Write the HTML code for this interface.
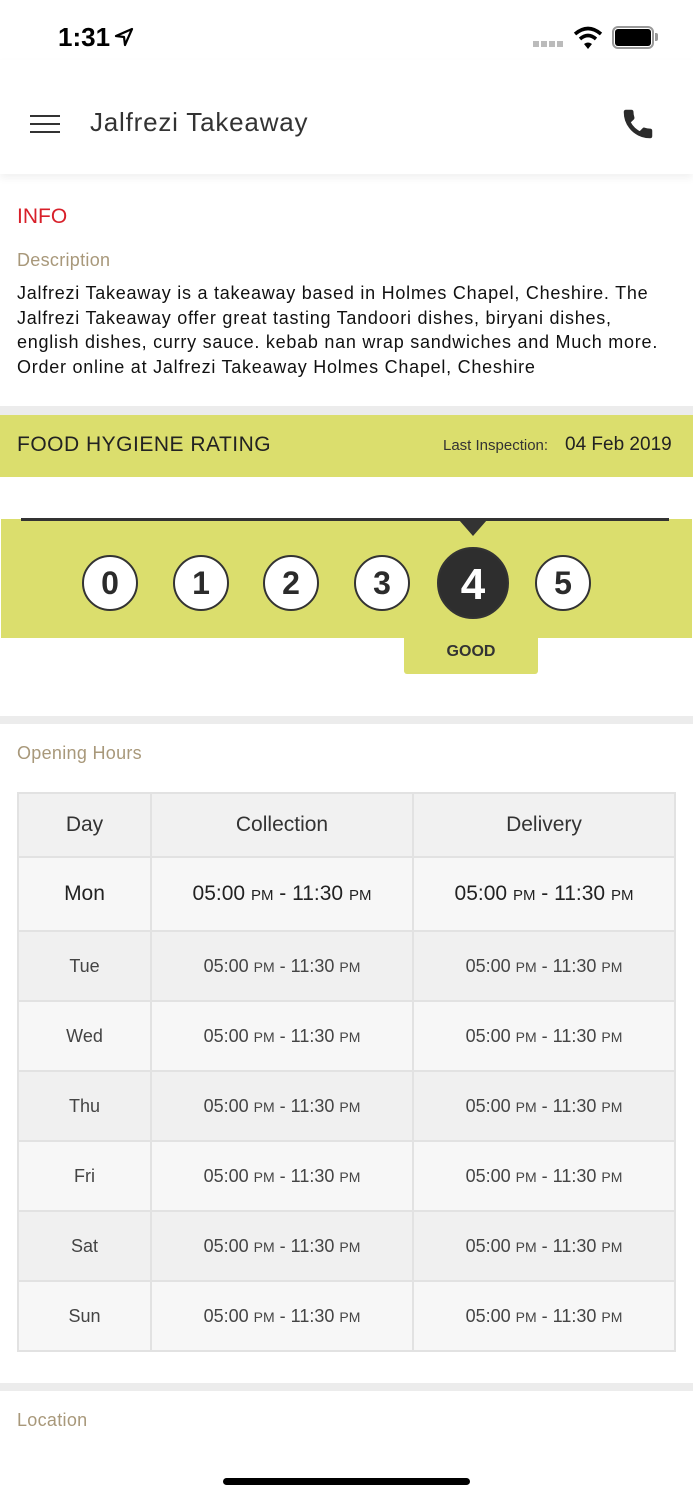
<!DOCTYPE html>
<html><head><meta charset="utf-8"><style>
*{margin:0;padding:0;box-sizing:border-box}
body{width:693px;height:1500px;background:#fff;font-family:"Liberation Sans",sans-serif;color:#222;position:relative;overflow:hidden}
.a{position:absolute}
.sep{position:absolute;left:0;width:693px;background:#ececec}
.lbl{position:absolute;left:17px;font-size:18px;color:#a8987a;letter-spacing:.3px}
table{position:absolute;left:17px;top:792px;width:659px;border-collapse:collapse}
td{border:2px solid #e2e2e2;text-align:center;color:#444;font-size:18px}
td small{font-size:14px}
.c{position:absolute;width:56px;height:56px;border-radius:50%;background:#fff;border:2px solid #333;font-size:32px;font-weight:bold;text-align:center;line-height:52px;color:#2b2b2b;top:555px}
</style></head><body>
<div class="a" style="left:58px;top:22px;font-size:26px;font-weight:bold;color:#000">1:31</div>
<svg class="a" style="left:114px;top:27px" width="20" height="20" viewBox="0 0 20 20"><path d="M18 2 L2 9 L10 10 L11 18 Z" fill="none" stroke="#000" stroke-width="2.2" stroke-linejoin="round"/></svg>
<div class="a" style="left:533px;top:41px;width:32px;height:6px;background:repeating-linear-gradient(90deg,#bbb 0 6px,transparent 6px 8px)"></div>
<svg class="a" style="left:573px;top:26px" width="30" height="24" viewBox="0 0 30 24"><path d="M2 8 Q15 -3 28 8" stroke="#000" stroke-width="3.5" fill="none"/><path d="M7 13 Q15 6 23 13" stroke="#000" stroke-width="3.5" fill="none"/><path d="M11 18 L15 23 L19 18 Q15 15 11 18Z" fill="#000"/></svg>
<div class="a" style="left:612px;top:26px;width:42px;height:23px;border:2px solid #999;border-radius:6px"></div>
<div class="a" style="left:615px;top:29px;width:36px;height:17px;background:#000;border-radius:3px"></div>
<div class="a" style="left:655px;top:33px;width:3px;height:8px;background:#999;border-radius:0 2px 2px 0"></div>

<div class="a" style="left:0;top:60px;width:693px;height:114px;box-shadow:0 4px 8px rgba(0,0,0,.06)"></div>
<div class="a" style="left:30px;top:115px;width:30px;height:2px;background:#333;box-shadow:0 8px 0 #333,0 16px 0 #333"></div>
<div class="a" style="left:90px;top:107px;font-size:26px;color:#333;letter-spacing:.8px">Jalfrezi Takeaway</div>
<svg class="a" style="left:620px;top:106px" width="36" height="36" viewBox="0 0 24 24"><path d="M6.6 10.8c1.4 2.8 3.8 5.1 6.6 6.6l2.2-2.2c.3-.3.7-.4 1-.2 1.1.4 2.3.6 3.6.6.6 0 1 .4 1 1V20c0 .6-.4 1-1 1C10.6 21 3 13.4 3 4c0-.6.4-1 1-1h3.5c.6 0 1 .4 1 1 0 1.2.2 2.4.6 3.6.1.3 0 .7-.2 1z" fill="#2b2b2b" stroke="#2b2b2b" stroke-width="1"/></svg>

<div class="a" style="left:17px;top:205px;font-size:21px;color:#d8202a">INFO</div>
<div class="lbl" style="top:250px">Description</div>
<div class="a" style="left:17px;top:281px;width:650px;font-size:18px;line-height:24.5px;color:#111;letter-spacing:.75px">Jalfrezi Takeaway is a takeaway based in Holmes Chapel, Cheshire. The Jalfrezi Takeaway offer great tasting Tandoori dishes, biryani dishes, english dishes, curry sauce. kebab nan wrap sandwiches and Much more. Order online at Jalfrezi Takeaway Holmes Chapel, Cheshire</div>

<div class="sep" style="top:406px;height:9px"></div>
<div class="a" style="left:0;top:415px;width:693px;height:62px;background:#dbde6d"></div>
<div class="a" style="left:17px;top:433px;font-size:21px;color:#222;letter-spacing:.5px">FOOD HYGIENE RATING</div>
<div class="a" style="left:443px;top:437px;font-size:15px;color:#333">Last Inspection:</div>
<div class="a" style="left:565px;top:434px;font-size:19px;color:#222">04 Feb 2019</div>

<div class="a" style="left:1px;top:519px;width:691px;height:119px;background:#dbde6d"></div>
<div class="a" style="left:21px;top:518px;width:648px;height:3px;background:#333"></div>
<div class="a" style="left:459px;top:520px;width:0;height:0;border-left:14px solid transparent;border-right:14px solid transparent;border-top:16px solid #333"></div>
<div class="a" style="left:404px;top:636px;width:134px;height:38px;background:#dbde6d;border-radius:0 0 3px 3px;text-align:center;font-size:16px;font-weight:bold;color:#333;line-height:32px">GOOD</div>
<div class="c" style="left:82px">0</div>
<div class="c" style="left:173px">1</div>
<div class="c" style="left:263px">2</div>
<div class="c" style="left:354px">3</div>
<div class="c" style="left:437px;top:547px;width:72px;height:72px;line-height:72px;background:#2e2e2e;color:#fff;font-size:44px">4</div>
<div class="c" style="left:535px">5</div>

<div class="sep" style="top:716px;height:8px"></div>
<div class="lbl" style="top:743px">Opening Hours</div>
<table>
<tr style="height:64px;background:#f1f1f1"><td style="width:133px;font-size:21px;color:#333">Day</td><td style="width:262px;font-size:21px;color:#333">Collection</td><td style="font-size:21px;color:#333">Delivery</td></tr>
<tr style="height:74px;background:#f7f7f7"><td style="font-size:21px;color:#222">Mon</td><td style="font-size:21px;color:#222">05:00 <small style="font-size:15px">PM</small> - 11:30 <small style="font-size:15px">PM</small></td><td style="font-size:21px;color:#222">05:00 <small style="font-size:15px">PM</small> - 11:30 <small style="font-size:15px">PM</small></td></tr>
<tr style="height:70px;background:#f0f0f0"><td>Tue</td><td>05:00 <small>PM</small> - 11:30 <small>PM</small></td><td>05:00 <small>PM</small> - 11:30 <small>PM</small></td></tr>
<tr style="height:70px;background:#f7f7f7"><td>Wed</td><td>05:00 <small>PM</small> - 11:30 <small>PM</small></td><td>05:00 <small>PM</small> - 11:30 <small>PM</small></td></tr>
<tr style="height:70px;background:#f0f0f0"><td>Thu</td><td>05:00 <small>PM</small> - 11:30 <small>PM</small></td><td>05:00 <small>PM</small> - 11:30 <small>PM</small></td></tr>
<tr style="height:70px;background:#f7f7f7"><td>Fri</td><td>05:00 <small>PM</small> - 11:30 <small>PM</small></td><td>05:00 <small>PM</small> - 11:30 <small>PM</small></td></tr>
<tr style="height:70px;background:#f0f0f0"><td>Sat</td><td>05:00 <small>PM</small> - 11:30 <small>PM</small></td><td>05:00 <small>PM</small> - 11:30 <small>PM</small></td></tr>
<tr style="height:70px;background:#f7f7f7"><td>Sun</td><td>05:00 <small>PM</small> - 11:30 <small>PM</small></td><td>05:00 <small>PM</small> - 11:30 <small>PM</small></td></tr>
</table>
<div class="sep" style="top:1383px;height:8px"></div>
<div class="lbl" style="top:1410px">Location</div>
<div class="a" style="left:223px;top:1478px;width:247px;height:7px;border-radius:4px;background:#000"></div>
</body></html>
